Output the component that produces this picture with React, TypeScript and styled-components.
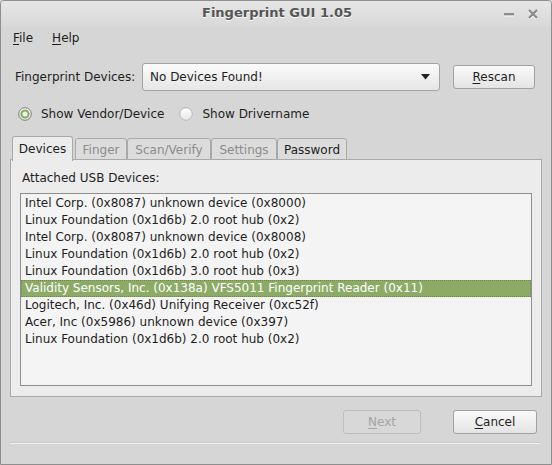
import React from 'react';
import styled, { createGlobalStyle } from 'styled-components';

const GlobalStyle = createGlobalStyle`
  html, body {
    margin: 0;
    padding: 0;
    background: #d6d6d6;
  }
  * {
    box-sizing: border-box;
  }
`;

const devices = [
  'Intel Corp. (0x8087) unknown device (0x8000)',
  'Linux Foundation (0x1d6b) 2.0 root hub (0x2)',
  'Intel Corp. (0x8087) unknown device (0x8008)',
  'Linux Foundation (0x1d6b) 2.0 root hub (0x2)',
  'Linux Foundation (0x1d6b) 3.0 root hub (0x3)',
  'Validity Sensors, Inc. (0x138a) VFS5011 Fingerprint Reader (0x11)',
  'Logitech, Inc. (0x46d) Unifying Receiver (0xc52f)',
  'Acer, Inc (0x5986) unknown device (0x397)',
  'Linux Foundation (0x1d6b) 2.0 root hub (0x2)',
];

const tabs = [
  { label: 'Devices', width: 61, active: true, enabled: true },
  { label: 'Finger', width: 52, active: false, enabled: false },
  { label: 'Scan/Verify', width: 84, active: false, enabled: false },
  { label: 'Settings', width: 66, active: false, enabled: false },
  { label: 'Password', width: 70, active: false, enabled: true },
];

const Mnemonic = ({ text }: { text: string }) => (
  <>
    <u>{text[0]}</u>
    {text.slice(1)}
  </>
);

const Radio = ({ checked }: { checked?: boolean }) => (
  <RadioIcon width="14" height="14" viewBox="0 0 14 14">
    <defs>
      <linearGradient id="rg" x1="0" y1="0" x2="0" y2="1">
        <stop offset="0" stopColor="#ffffff" />
        <stop offset="1" stopColor="#e6e6e6" />
      </linearGradient>
    </defs>
    <circle cx="7" cy="7" r="6.3" fill="url(#rg)" stroke={checked ? '#7a7a7a' : '#b4b4b4'} strokeWidth="1" />
    {checked && <circle cx="7" cy="7" r="3.6" fill="#eef4e4" stroke="#86a860" strokeWidth="2" />}
  </RadioIcon>
);

const App = () => {
  return (
    <>
      <GlobalStyle />
      <Window>
        <TitleBar>
          <Title>Fingerprint GUI 1.05</Title>
          <Controls>
            <svg width="10" height="10" viewBox="0 0 10 10">
              <rect x="0" y="5" width="10" height="2.4" fill="#ffffff" />
              <rect x="0" y="4" width="10" height="2.4" fill="#8c8c8c" />
            </svg>
            <svg width="10" height="10" viewBox="0 0 10 10">
              <path d="M1 2 L9 10 M9 2 L1 10" stroke="#ffffff" strokeWidth="2.4" />
              <path d="M1 1 L9 9 M9 1 L1 9" stroke="#8c8c8c" strokeWidth="2.4" />
            </svg>
          </Controls>
        </TitleBar>

        <MenuBar>
          <MenuItem><Mnemonic text="File" /></MenuItem>
          <MenuItem><Mnemonic text="Help" /></MenuItem>
        </MenuBar>

        <Body>
          <DeviceRow>
            <Label>Fingerprint Devices:</Label>
            <Combo>
              <span>No Devices Found!</span>
              <svg width="9" height="6" viewBox="0 0 9 6">
                <path d="M0 0 H9 L4.5 5.5 Z" fill="#222" />
              </svg>
            </Combo>
            <Button $width={82} $gap={13}><Mnemonic text="Rescan" /></Button>
          </DeviceRow>

          <RadioRow>
            <RadioOption>
              <Radio checked />
              Show Vendor/Device
            </RadioOption>
            <RadioOption>
              <Radio />
              Show Drivername
            </RadioOption>
          </RadioRow>

          <TabBar>
            {tabs.map((t) => (
              <Tab key={t.label} $width={t.width} $active={t.active} $enabled={t.enabled}>
                {t.label}
              </Tab>
            ))}
          </TabBar>
          <TabPane>
            <PaneLabel>Attached USB Devices:</PaneLabel>
            <DeviceList>
              {devices.map((d, i) => (
                <DeviceItem key={i} $selected={i === 5}>
                  {d}
                </DeviceItem>
              ))}
            </DeviceList>
          </TabPane>

          <ButtonRow>
            <Button $width={78} $gap={0} disabled>
              <Mnemonic text="Next" />
            </Button>
            <Button $width={84} $gap={32}>
              <Mnemonic text="Cancel" />
            </Button>
          </ButtonRow>
          <Separator />
        </Body>
      </Window>
    </>
  );
};

export default App;

const Window = styled.div`
  width: 552px;
  height: 465px;
  display: flex;
  flex-direction: column;
  background: #d6d6d6;
  border: 1px solid #8e8e8e;
  border-radius: 4px 4px 0 0;
  overflow: hidden;
  font-family: 'DejaVu Sans', sans-serif;
  font-size: 12px;
  color: #1e1e1e;
`;

const TitleBar = styled.div`
  position: relative;
  height: 26px;
  padding-bottom: 3px;
  display: flex;
  align-items: center;
  justify-content: center;
  background: linear-gradient(#e6e6e6, #d8d8d8);
`;

const Title = styled.div`
  font-weight: bold;
  font-size: 13px;
  color: #555555;
  text-shadow: 0 1px 0 #ffffff;
  margin-left: 2px;
`;

const Controls = styled.div`
  position: absolute;
  right: 13px;
  top: 8px;
  display: flex;
  gap: 14px;
`;

const MenuBar = styled.div`
  display: flex;
  gap: 19px;
  padding: 0 12px 0;
  height: 22px;
  align-items: center;
  u {
    text-decoration-thickness: 1px;
    text-underline-offset: 2px;
  }
`;

const MenuItem = styled.span`
  font-size: 12px;
`;

const Body = styled.div`
  flex: 1;
  display: flex;
  flex-direction: column;
  padding: 0 9px 0 9px;
`;

const DeviceRow = styled.div`
  display: flex;
  align-items: center;
  padding: 14px 0 0 5px;
  height: 42px;
`;

const Label = styled.span`
  width: 127px;
`;

const Combo = styled.div`
  width: 298px;
  height: 28px;
  display: flex;
  align-items: center;
  justify-content: space-between;
  padding: 0 9px 0 7px;
  background: linear-gradient(#fbfbfb, #e6e6e6);
  border: 1px solid #a4a4a4;
  border-radius: 3px;
`;

const Button = styled.button<{ $width: number; $gap: number }>`
  width: ${(p) => p.$width}px;
  height: 24px;
  margin-left: ${(p) => p.$gap}px;
  font-family: inherit;
  font-size: 12px;
  color: #1e1e1e;
  background: linear-gradient(#fafafa, #e4e4e4);
  border: 1px solid #a2a2a2;
  border-radius: 3px;
  padding: 0;
  u {
    text-decoration-thickness: 1px;
    text-underline-offset: 2px;
  }
  &:disabled {
    color: #a4a4a4;
    background: #d8d8d8;
    border-color: #bdbdbd;
  }
`;

const RadioRow = styled.div`
  display: flex;
  align-items: center;
  gap: 15px;
  padding: 0 0 0 8px;
  margin-top: 9px;
  height: 28px;
`;

const RadioOption = styled.label`
  display: flex;
  align-items: center;
  gap: 9px;
`;

const RadioIcon = styled.svg`
  display: block;
`;

const TabBar = styled.div`
  display: flex;
  align-items: flex-end;
  padding-left: 2px;
  height: 25px;
  margin-top: 7px;
  position: relative;
  z-index: 1;
`;

const Tab = styled.div<{ $width: number; $active: boolean; $enabled: boolean }>`
  width: ${(p) => p.$width}px;
  height: ${(p) => (p.$active ? 25 : 22)}px;
  margin-right: ${(p) => (p.$active ? 2 : 0)}px;
  display: flex;
  align-items: center;
  justify-content: center;
  padding-top: ${(p) => (p.$active ? 0 : 1)}px;
  background: ${(p) => (p.$active ? '#ececec' : '#dcdcdc')};
  border: 1px solid #a9a9a9;
  border-bottom: ${(p) => (p.$active ? 'none' : '1px solid #a9a9a9')};
  border-radius: 3px 3px 0 0;
  color: ${(p) => (p.$enabled ? '#1e1e1e' : '#8c8c8c')};
  margin-bottom: ${(p) => (p.$active ? -1 : 0)}px;
`;

const TabPane = styled.div`
  height: 238px;
  margin-top: -1px;
  background: #ececec;
  border: 1px solid #a9a9a9;
  padding: 11px 9px 10px 9px;
  display: flex;
  flex-direction: column;
`;

const PaneLabel = styled.div`
  height: 22px;
  padding-left: 2px;
`;

const DeviceList = styled.div`
  flex: 1;
  background: #f4f4f4;
  border: 1px solid #8e8e8e;
  padding: 1px 0;
`;

const DeviceItem = styled.div<{ $selected: boolean }>`
  height: 17px;
  line-height: 17px;
  padding-left: 4px;
  white-space: nowrap;
  background: ${(p) => (p.$selected ? '#8dab67' : 'transparent')};
  color: ${(p) => (p.$selected ? '#ffffff' : '#1e1e1e')};
  outline: ${(p) => (p.$selected ? '1px dotted #6d8a4b' : 'none')};
  outline-offset: -1px;
`;

const ButtonRow = styled.div`
  display: flex;
  justify-content: flex-end;
  padding: 13px 5px 0 0;
  height: 37px;
`;

const Separator = styled.div`
  margin-top: 9px;
  height: 1px;
  background: #f2f2f2;
  margin-right: 2px;
  box-shadow: 0 -1px 0 #cacaca;
`;
